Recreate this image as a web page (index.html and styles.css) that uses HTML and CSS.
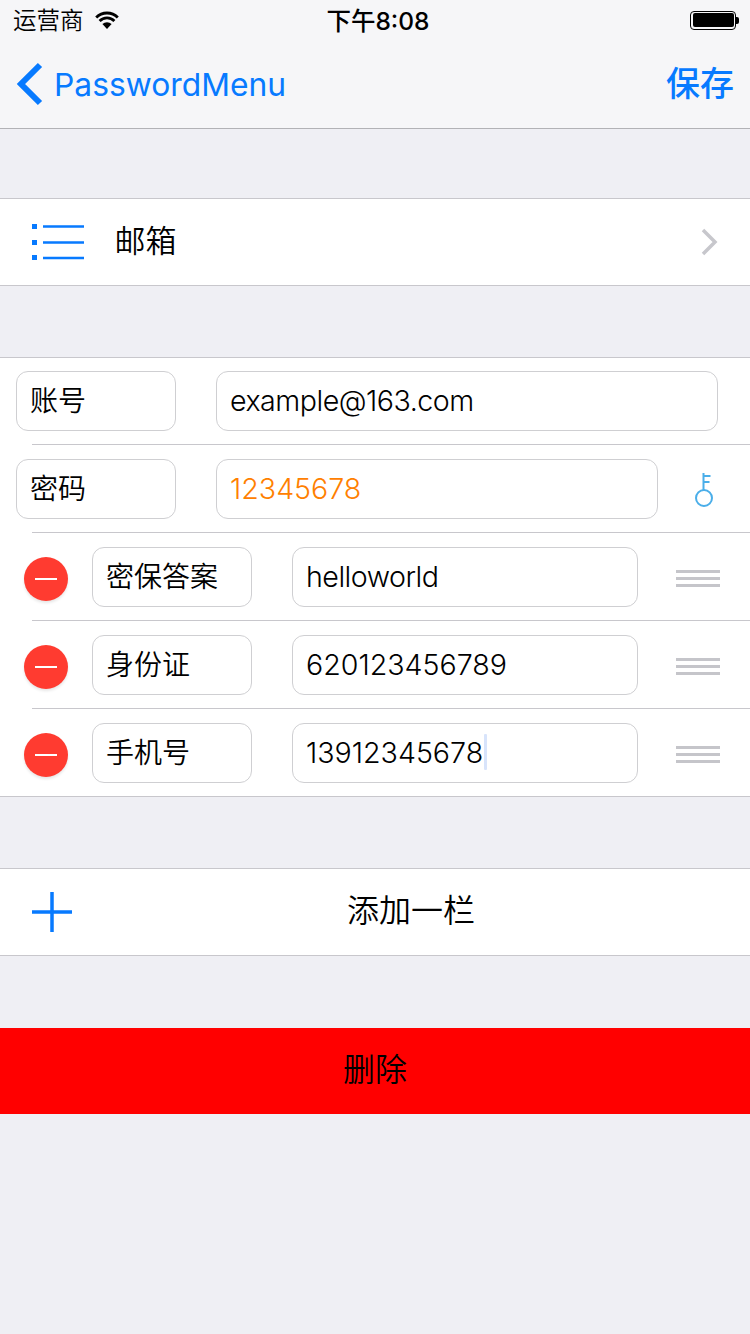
FILE: index.html

```html
<!DOCTYPE html>
<html lang="zh-CN">
<head>
  <meta charset="UTF-8">
  <meta name="viewport" content="width=device-width, initial-scale=1">
  <title>PasswordMenu</title>
  <link rel="stylesheet" href="styles.css">
</head>
<body>
  <header class="topbar">
    <div class="status">
      <div class="status-left">
        <span class="carrier cjk">运营商</span>
        <svg class="wifi" width="24" height="18" viewBox="0 0 24 18"><path d="M12 18 7.400 13a6.800 6.800 0 0 1 9.200 0Z" fill="#000"/><path d="M4.600 10a10.400 10.400 0 0 1 14.800 0M1.200 6.400a15.400 15.400 0 0 1 21.600 0" fill="none" stroke="#000" stroke-width="2.800"/></svg>
      </div>
      <span class="clock">下午8:08</span>
      <div class="status-right">
        <span class="battery"><span class="battery-fill"></span></span>
        <span class="battery-tip"></span>
      </div>
    </div>
    <nav class="navbar">
      <a class="back">
        <svg width="28" height="44" viewBox="0 0 28 44"><path d="M24 3 5 22l19 19" fill="none" stroke="#077aff" stroke-width="6"/></svg>
        <span>PasswordMenu</span>
      </a>
      <a class="save cjk">保存</a>
    </nav>
  </header>

  <main>
    <section class="group category">
      <svg class="list-icon" width="52" height="38" viewBox="0 0 52 38"><path d="M0 1h5v5H0zM0 17h5v5H0zM0 32h5v5H0z" fill="#077aff"/><path d="M11 3.500h41M11 19.500h41M11 35h41" stroke="#077aff" stroke-width="2.500"/></svg>
      <span class="category-name cjk">邮箱</span>
      <svg class="chevron" width="18" height="28" viewBox="0 0 18 28"><path d="M2 2l12 12L2 26" fill="none" stroke="#c7c7cc" stroke-width="3.500"/></svg>
    </section>

    <section class="group fields">
      <div class="row">
        <div class="field field-label cjk">账号</div>
        <div class="field field-value tight">example@163.com</div>
      </div>
      <div class="row">
        <div class="field field-label cjk">密码</div>
        <div class="field field-value field-short password">12345678</div>
        <svg class="key" width="20" height="36" viewBox="0 0 20 36"><circle cx="10" cy="26" r="8" fill="none" stroke="#4aaee9" stroke-width="2"/><path d="M9.500 18V1M9.500 4h7M9.500 10h6" fill="none" stroke="#4aaee9" stroke-width="2"/></svg>
      </div>
      <div class="row row-edit">
        <span class="minus"><span class="minus-bar"></span></span>
        <div class="field field-label cjk">密保答案</div>
        <div class="field field-value field-edit tight">helloworld</div>
        <span class="grip"><i></i><i></i><i></i></span>
      </div>
      <div class="row row-edit">
        <span class="minus"><span class="minus-bar"></span></span>
        <div class="field field-label cjk">身份证</div>
        <div class="field field-value field-edit">620123456789</div>
        <span class="grip"><i></i><i></i><i></i></span>
      </div>
      <div class="row row-edit">
        <span class="minus"><span class="minus-bar"></span></span>
        <div class="field field-label cjk">手机号</div>
        <div class="field field-value field-edit">13912345678<span class="caret"></span></div>
        <span class="grip"><i></i><i></i><i></i></span>
      </div>
    </section>

    <section class="group add">
      <svg class="plus" width="40" height="40" viewBox="0 0 40 40"><path d="M20 0v40M0 20h40" stroke="#077aff" stroke-width="3.500"/></svg>
      <span class="add-text cjk">添加一栏</span>
    </section>

    <button class="delete cjk">删除</button>
  </main>
</body>
</html>
```

FILE: styles.css

```css
/* Reset */
* { margin: 0; padding: 0; box-sizing: border-box; }
html, body {
  height: 100%;
}
body {
  font-family: Inter, 'Noto Sans CJK SC', sans-serif;
  background: #efeff4;
  color: #000;
  overflow: hidden;
}
.cjk {
  font-family: 'Noto Sans CJK SC', sans-serif;
  font-weight: 350;
}
.tight {
  letter-spacing: -0.5px;
}

/* Top bar */
.topbar {
  height: 129px;
  background: #f6f6f8;
  border-bottom: 1px solid #b2b2b6;
}
.status {
  height: 40px;
  padding: 0 11px 0 13px;
  display: grid;
  grid-template-columns: 1fr auto 1fr;
  align-items: center;
}
.status-left {
  display: flex;
  align-items: center;
  gap: 11px;
}
.carrier {
  font-size: 23.500px;
  margin-bottom: 2px;
}
.clock {
  font-size: 24.500px;
  font-weight: 450;
  margin-top: -1px;
  margin-left: 4px;
}
.status-right {
  display: flex;
  align-items: center;
  justify-content: flex-end;
}
.battery {
  width: 46px;
  height: 19px;
  padding: 1.500px;
  border: 1px solid #000;
  border-radius: 4px;
  display: flex;
}
.battery-fill {
  flex: 1;
  background: #000;
  border-radius: 2px;
}
.battery-tip {
  width: 3px;
  height: 7px;
  background: #000;
  border-radius: 0 2px 2px 0;
}
.navbar {
  height: 88px;
  padding: 0 16px;
  display: flex;
  align-items: center;
  justify-content: space-between;
  color: #077aff;
}
.back {
  display: flex;
  align-items: center;
  gap: 10px;
  font-size: 31.800px;
}
.save {
  font-size: 34px;
  font-weight: 450;
  margin-bottom: 6px;
}

/* Groups */
.group {
  background: #fff;
  box-shadow: inset 0 1px #c8c7cc, inset 0 -1px #c8c7cc;
}
.category {
  margin-top: 69px;
  height: 88px;
  padding: 0 32px;
  display: flex;
  align-items: center;
}
.category-name {
  margin-left: 30.500px;
  margin-bottom: 8px;
  font-size: 31px;
  flex: 1;
}
.chevron {
  margin-right: -1px;
}
.fields {
  margin-top: 71px;
}
.row {
  height: 88px;
  padding-left: 16px;
  display: flex;
  align-items: center;
  background: linear-gradient(#c8c7cc, #c8c7cc) 32px 100% / 100% 1px no-repeat;
}
.row:last-child {
  background: none;
}
.row-edit {
  padding-left: 24px;
}

/* Text boxes */
.field {
  height: 60px;
  padding: 0 13px;
  border: 1px solid #cfcfd2;
  border-radius: 12px;
  background: #fff;
  font-size: 28px;
  display: flex;
  align-items: center;
}
.field-label {
  width: 160px;
  padding-bottom: 4px;
  flex: none;
}
.field-value {
  width: 502px;
  margin-left: 40px;
  padding-bottom: 2px;
  font-size: 28.600px;
  font-weight: 350;
}
.field-short {
  width: 442px;
}
.field-edit {
  width: 346px;
}
.password {
  color: #ff8000;
}
.caret {
  width: 3px;
  height: 36px;
  margin-left: 1px;
  background: #d8e4fb;
  border-radius: 1px;
}
.key {
  margin-left: 36px;
  margin-top: 2px;
}

/* Edit controls */
.minus {
  width: 44px;
  height: 44px;
  margin-top: 4px;
  margin-right: 24px;
  border-radius: 50%;
  background: #ff3b30;
  box-shadow: 0 2px 3px rgba(0, 0, 0, 0.1);
  display: flex;
  align-items: center;
  justify-content: center;
  flex: none;
}
.minus-bar {
  width: 22px;
  height: 2px;
  background: #fff;
}
.grip {
  width: 44px;
  margin-left: 38px;
  margin-top: 2px;
  display: flex;
  flex-direction: column;
  gap: 4px;
}
.grip i {
  height: 3px;
  background: #c5c5ca;
}

/* Add row */
.add {
  margin-top: 71px;
  height: 88px;
  padding-left: 32px;
  display: flex;
  align-items: center;
}
.plus {
  flex: none;
}
.add-text {
  margin-left: 275px;
  margin-bottom: 9px;
  font-size: 32px;
}

/* Delete */
.delete {
  display: block;
  width: 100%;
  height: 86px;
  margin-top: 72px;
  padding-bottom: 8px;
  border: 0;
  background: #f00;
  color: #000;
  font-size: 32px;
}
```
